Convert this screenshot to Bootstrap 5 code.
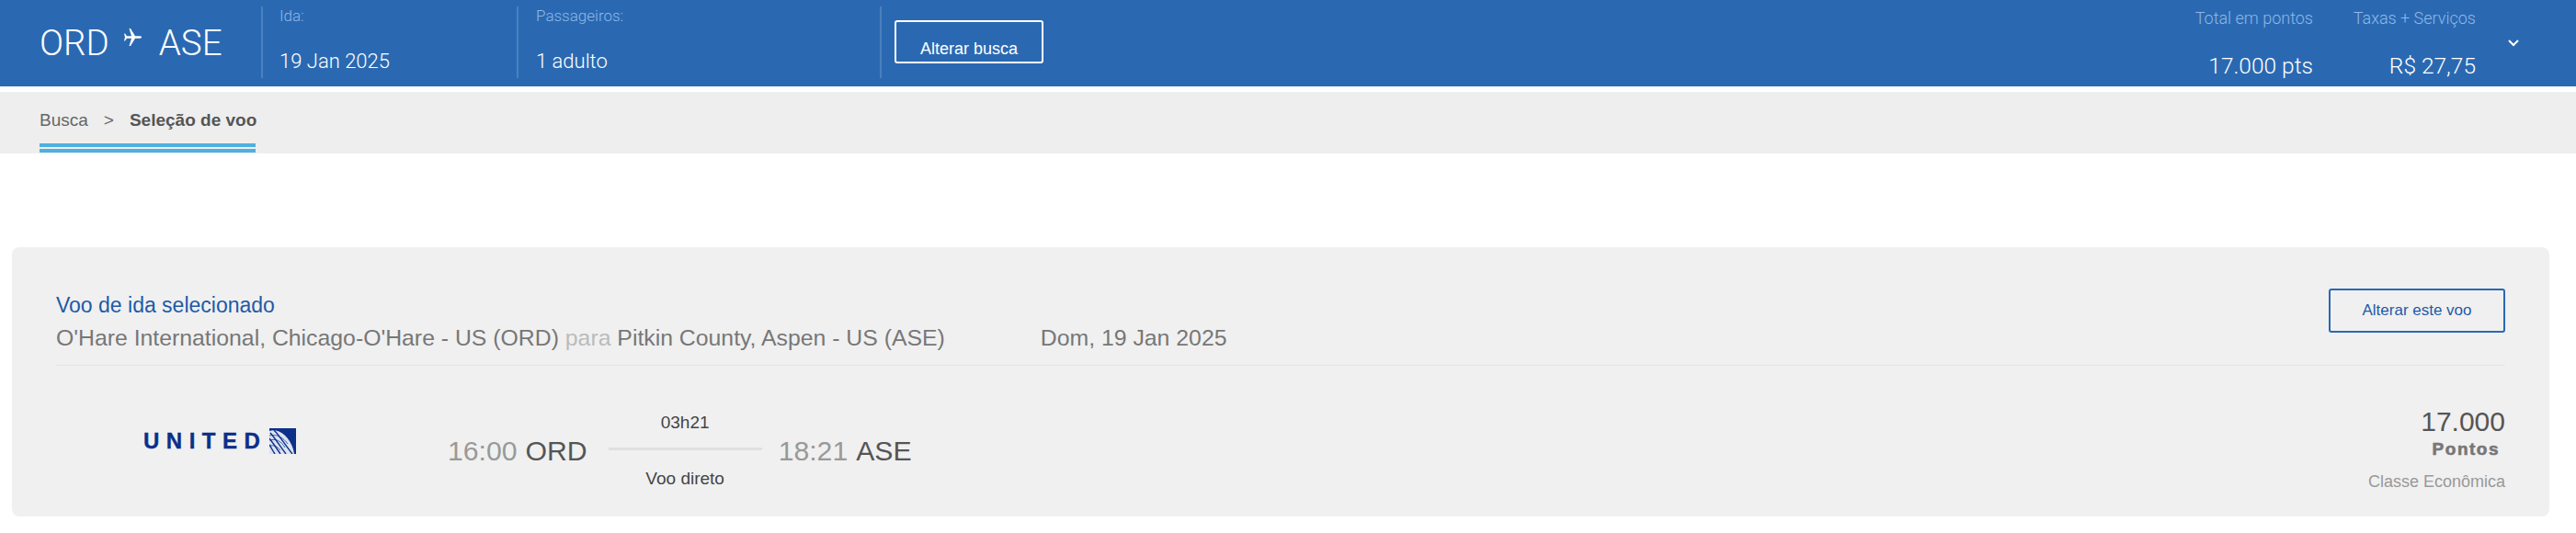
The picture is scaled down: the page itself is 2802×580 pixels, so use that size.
<!DOCTYPE html>
<html lang="pt-BR">
<head>
    <meta charset="UTF-8">
    <meta name="viewport" content="width=device-width, initial-scale=1.0">
    <title>Seleção de voo</title>
    <link href="https://cdn.jsdelivr.net/npm/bootstrap@5.3.0/dist/css/bootstrap.min.css" rel="stylesheet">
    <style>
        body { font-family: "Liberation Sans", Arial, sans-serif; background: #fff; }
        .top-bar { height: 94px; background: #2a69b2; color: #fff; font-family: Roboto, "Liberation Sans", sans-serif; font-weight: 300; }
        .route { width: 284px; padding-left: 43px; font-size: 38.5px; line-height: 40px; }
        .route svg { margin: 0 19px 14px 16px; }
        .bar-cell { margin-top: 7px; height: 78px; border-left: 2px solid #4a80bd; }
        .cell-date { width: 278px; padding-left: 18px; }
        .cell-pax { width: 395px; padding-left: 19px; }
        .cell-btn { padding-left: 14px; padding-top: 15px; }
        .bar-label { font-size: 17px; line-height: 20px; color: #8fb8e6; }
        .bar-value { font-size: 22px; line-height: 26px; margin-top: 27px; }
        .btn-search { width: 162px; height: 47px; padding: 14px 0 0; border: 2px solid #fff; border-radius: 3px; color: #fff; font-family: "Liberation Sans", sans-serif; font-size: 18px; line-height: 26px; background: transparent; }
        .total-col { padding-top: 10px; text-align: right; }
        .total-col .bar-label { font-size: 18px; }
        .total-col .bar-value { font-size: 24.5px; line-height: 30px; margin-top: 27px; }
        .col-points { width: 160px; }
        .col-fees { width: 177px; }
        .chevron-col { width: 109px; padding: 43px 0 0 35px; }
        .crumb-band { margin-top: 6px; height: 67px; background: #eee; padding-left: 43px; }
        .crumb-text { width: 235px; height: 66px; padding-top: 20px; font-size: 19px; line-height: 22px; color: #666; white-space: nowrap; background: linear-gradient(#4fb0e0, #4fb0e0) 0 56px / 100% 4px no-repeat, linear-gradient(#4fb0e0, #4fb0e0) 0 62px / 100% 4px no-repeat; }
        .crumb-sep { margin: 0 17px; }
        .crumb-text strong { color: #555; }
        .flight-box { margin: 102px 29px 0 13px; height: 293px; background: #f0f0f0; border-radius: 8px; padding: 0 48px; }
        .flight-head { height: 129px; border-bottom: 1px solid #e5e5e5; }
        .head-title { padding-top: 50px; font-size: 23px; line-height: 26px; color: #1e5aa8; }
        .head-route { margin-top: 9px; font-size: 24.8px; line-height: 28px; color: #777; white-space: nowrap; }
        .head-route span { color: #bbb; }
        .head-date { margin-left: 104px; }
        .btn-change { width: 192px; height: 48px; margin-top: 45px; padding: 0; border: 2px solid #2a69b2; border-radius: 3px; font-size: 17px; color: #1e5aa8; background: transparent; }
        .logo-col { width: 426px; padding: 68px 0 0 95px; }
        .logo-word { font-size: 24px; line-height: 28px; font-weight: 700; letter-spacing: 7.5px; color: #0c2f8a; -webkit-text-stroke: .4px #0c2f8a; margin-right: 3px; }
        .times { padding-top: 74px; font-size: 30.2px; line-height: 38px; color: #999; white-space: nowrap; }
        .times span { color: #555; margin-left: 9px; }
        .leg { width: 167px; margin: 0 18px 0 23px; padding-top: 51px; text-align: center; font-size: 19px; line-height: 22px; color: #444; }
        .leg-line { height: 3px; background: #e0e0e0; margin: 16px 0 20px; }
        .price-col { margin-left: auto; padding-top: 42px; text-align: right; }
        .price-num { font-size: 30px; line-height: 38px; color: #555; }
        .price-unit { font-size: 19px; line-height: 22px; font-weight: 700; letter-spacing: 1.5px; color: #777; -webkit-text-stroke: .6px #777; margin-right: 6px; }
        .price-class { font-size: 18px; line-height: 22px; margin-top: 13px; color: #999; }
    </style>
</head>
<body>
    <!-- Top summary bar -->
    <div class="top-bar d-flex">
        <div class="route d-flex align-items-center">
            <span>ORD</span>
            <svg width="19" height="19" viewBox="0 0 19 19" fill="#fff"><path d="M19 9.500c0-.8-1-1.200-2-1.200h-5L7 0H5.500L8 8.300H3L1 5.500H0l1 4-1 4h1l2-2.800h5L5.500 19H7l5-8.300h5c1 0 2-.4 2-1.200z"/></svg>
            <span>ASE</span>
        </div>
        <div class="bar-cell cell-date">
            <div class="bar-label">Ida:</div>
            <div class="bar-value">19 Jan 2025</div>
        </div>
        <div class="bar-cell cell-pax">
            <div class="bar-label">Passageiros:</div>
            <div class="bar-value">1 adulto</div>
        </div>
        <div class="bar-cell cell-btn">
            <button class="btn btn-search" type="button">Alterar busca</button>
        </div>
        <div class="total-col col-points ms-auto">
            <div class="bar-label">Total em pontos</div>
            <div class="bar-value">17.000 pts</div>
        </div>
        <div class="total-col col-fees">
            <div class="bar-label">Taxas + Serviços</div>
            <div class="bar-value">R$ 27,75</div>
        </div>
        <div class="chevron-col">
            <svg class="d-block" width="12" height="8" viewBox="0 0 12 8" fill="none" stroke="#fff" stroke-width="2"><path d="M1 1l5 5 5-5"/></svg>
        </div>
    </div>

    <!-- Breadcrumb -->
    <div class="crumb-band">
        <div class="crumb-text">Busca<span class="crumb-sep">&gt;</span><strong>Seleção de voo</strong></div>
    </div>

    <!-- Selected flight -->
    <div class="flight-box">
        <div class="flight-head d-flex justify-content-between">
            <div>
                <div class="head-title">Voo de ida selecionado</div>
                <div class="head-route">O'Hare International, Chicago-O'Hare - US (ORD) <span>para</span> Pitkin County, Aspen - US (ASE)<em class="head-date fst-normal">Dom, 19 Jan 2025</em></div>
            </div>
            <button class="btn btn-change" type="button">Alterar este voo</button>
        </div>
        <div class="d-flex">
            <div class="logo-col d-flex align-items-center align-self-start">
                <span class="logo-word">UNITED</span>
                <svg width="29" height="28" viewBox="0 0 29 28">
                    <rect width="29" height="28" fill="#0c2f8a"/>
                    <path d="M0 3C9 0 21 7 26 23l1 5H0z" fill="#dbe2f0"/>
                    <g fill="none" stroke="#0c2f8a" stroke-width="1.400">
                        <path d="M5 2c6 6 12 16 20 26"/>
                        <path d="M1 5c6 7 11 15 17 23"/>
                        <path d="M0 11c4 5 8 11 12 17"/>
                        <path d="M0 18c2 3 4 7 6 10"/>
                    </g>
                    <g fill="none" stroke="#0c2f8a" stroke-width=".7">
                        <path d="M0 8c8-2 15 2 20 9"/>
                        <path d="M0 13c7-2 13 1 17 8"/>
                        <path d="M0 19c5-1 9 1 12 5"/>
                    </g>
                </svg>
            </div>
            <div class="times">16:00<span>ORD</span></div>
            <div class="leg">
                <div>03h21</div>
                <div class="leg-line"></div>
                <div>Voo direto</div>
            </div>
            <div class="times">18:21<span>ASE</span></div>
            <div class="price-col">
                <div class="price-num">17.000</div>
                <div class="price-unit">Pontos</div>
                <div class="price-class">Classe Econômica</div>
            </div>
        </div>
    </div>
    <script src="https://cdn.jsdelivr.net/npm/bootstrap@5.3.0/dist/js/bootstrap.bundle.min.js"></script>
</body>
</html>
